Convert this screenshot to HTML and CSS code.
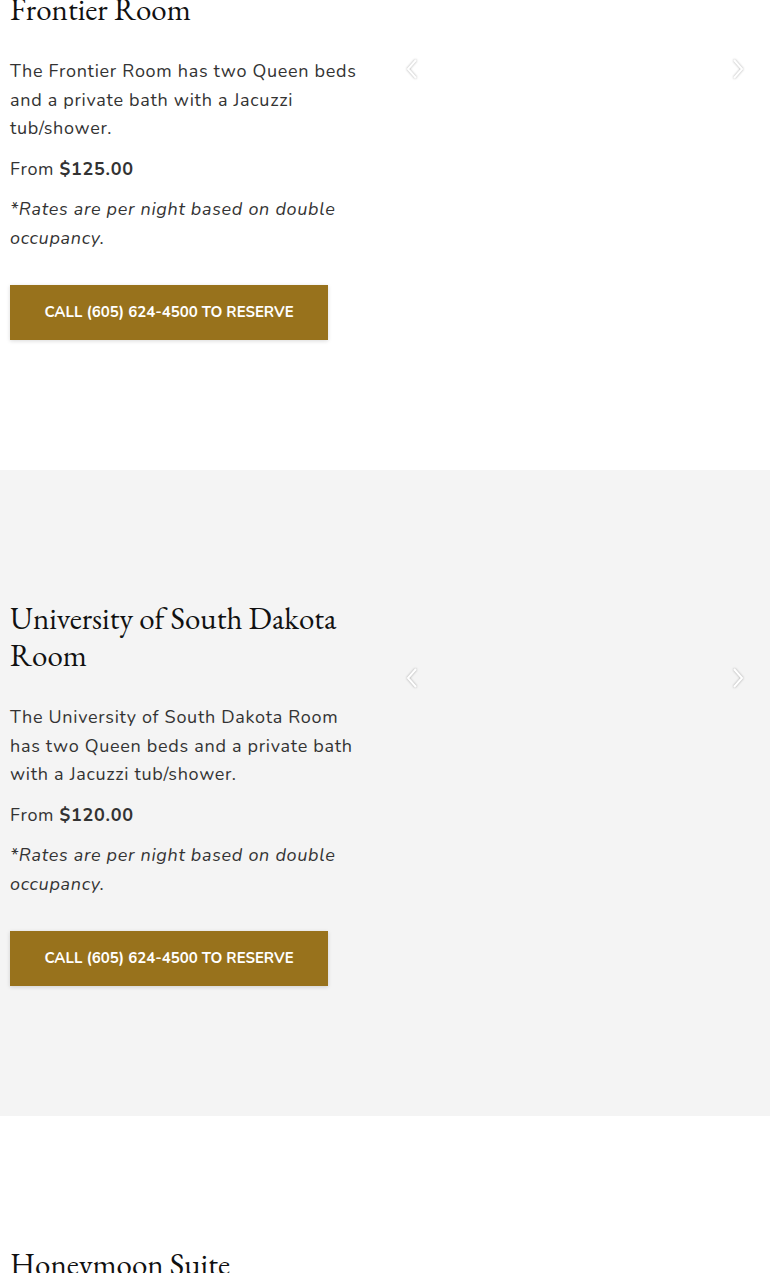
FILE: index.html
```html
<!DOCTYPE html>
<html lang="en">
<head>
<meta charset="utf-8">
<title>Rooms</title>
<link rel="stylesheet" href="styles.css">
</head>
<body>
<section class="room room-first">
  <div class="room-inner">
    <div class="room-text">
      <h2 class="room-title">Frontier Room</h2>
      <p class="room-desc">The Frontier Room has two Queen beds and a private bath with a Jacuzzi tub/shower.</p>
      <p class="room-price">From <strong>$125.00</strong></p>
      <p class="room-note">*Rates are per night based on double occupancy.</p>
      <a class="room-btn" href="#">CALL (605) 624-4500 TO RESERVE</a>
    </div>
    <div class="room-gallery">
      <span class="arrow arrow-prev"><svg width="14" height="22" viewBox="0 0 14 22"><polyline points="11,2 3,11 11,20"/></svg></span>
      <span class="arrow arrow-next"><svg width="14" height="22" viewBox="0 0 14 22"><polyline points="3,2 11,11 3,20"/></svg></span>
    </div>
  </div>
</section>
<section class="room room-alt">
  <div class="room-inner">
    <div class="room-text">
      <h2 class="room-title">University of South Dakota Room</h2>
      <p class="room-desc">The University of South Dakota Room has two Queen beds and a private bath with a Jacuzzi tub/shower.</p>
      <p class="room-price">From <strong>$120.00</strong></p>
      <p class="room-note">*Rates are per night based on double occupancy.</p>
      <a class="room-btn" href="#">CALL (605) 624-4500 TO RESERVE</a>
    </div>
    <div class="room-gallery">
      <span class="arrow arrow-prev"><svg width="14" height="22" viewBox="0 0 14 22"><polyline points="11,2 3,11 11,20"/></svg></span>
      <span class="arrow arrow-next"><svg width="14" height="22" viewBox="0 0 14 22"><polyline points="3,2 11,11 3,20"/></svg></span>
    </div>
  </div>
</section>
<section class="room">
  <div class="room-inner">
    <div class="room-text">
      <h2 class="room-title">Honeymoon Suite</h2>
      <p class="room-desc">The Honeymoon Suite has a King bed and a private bath with a Jacuzzi tub/shower.</p>
    </div>
    <div class="room-gallery"></div>
  </div>
</section>
</body>
</html>
```
FILE: styles.css
```css
html, body {
  margin: 0;
  padding: 0;
  background: #fff;
}
body {
  font-family: "Nunito", "Open Sans", "Noto Sans", sans-serif;
  color: #333;
  font-size: 18px;
  line-height: 1.6;
}
.room {
  padding: 130px 0;
  background: #fff;
}
.room-first {
  margin-top: -139px;
}
.room-alt {
  background: #f4f4f4;
}
.room-inner {
  display: grid;
  grid-template-columns: 1fr 1fr;
  column-gap: 30px;
  padding: 0 10px;
}
.room-title {
  font-family: "EB Garamond", "Liberation Serif", serif;
  font-weight: 400;
  font-size: 31px;
  line-height: 37px;
  color: #111;
  margin: 0 0 29px;
}
.room-desc, .room-price, .room-note {
  margin: 0 0 12px;
  font-size: 18px;
  letter-spacing: 0.7px;
  line-height: 28.5px;
}
.room-price strong {
  font-weight: 700;
}
.room-note {
  font-style: italic;
}
.room-btn {
  display: inline-block;
  margin-top: 21px;
  width: 318px;
  height: 55px;
  line-height: 55px;
  text-align: center;
  background: #98721c;
  color: #fff;
  font-weight: 700;
  font-size: 15px;
  text-decoration: none;
  box-shadow: 0 1px 4px rgba(0,0,0,0.15);
}
.room-gallery {
  display: flex;
  justify-content: space-between;
  align-items: flex-start;
  padding: 67px 15px 0 5px;
}
.arrow svg {
  display: block;
  fill: none;
  stroke: #fff;
  stroke-width: 2;
  filter: drop-shadow(0 0 1px rgba(0,0,0,0.35));
}
```
